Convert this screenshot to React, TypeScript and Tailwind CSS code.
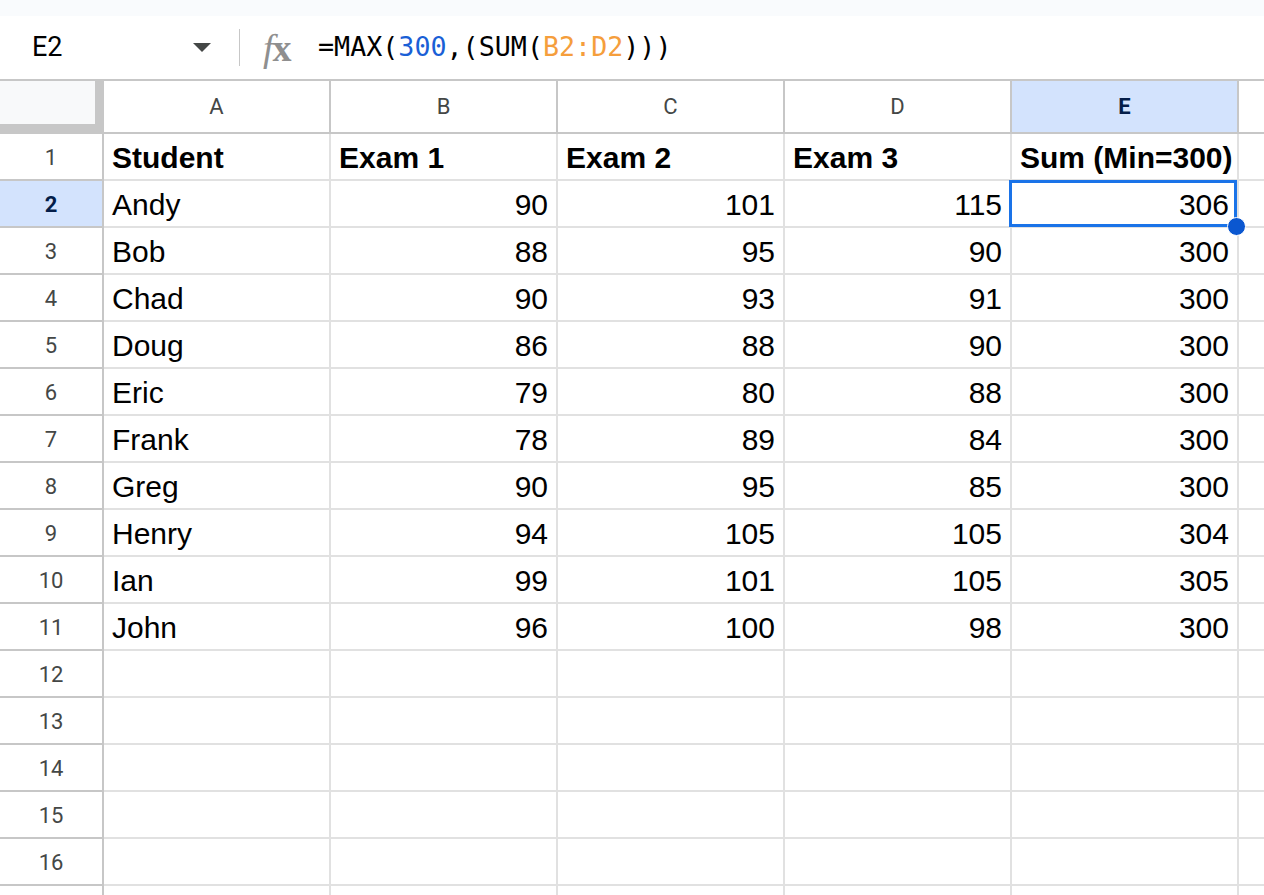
import React from "react";

const rows: (string | number)[][] = [
  ["Andy", 90, 101, 115, 306],
  ["Bob", 88, 95, 90, 300],
  ["Chad", 90, 93, 91, 300],
  ["Doug", 86, 88, 90, 300],
  ["Eric", 79, 80, 88, 300],
  ["Frank", 78, 89, 84, 300],
  ["Greg", 90, 95, 85, 300],
  ["Henry", 94, 105, 105, 304],
  ["Ian", 99, 101, 105, 305],
  ["John", 96, 100, 98, 300],
];

const cols = ["A", "B", "C", "D", "E"];

function RowHeader({ n, selected }: { n?: number; selected?: boolean }) {
  return (
    <div
      className={
        "h-[47px] flex items-center justify-center pt-[1px] border-r-2 border-b-2 border-[#c7c7c7] font-['Roboto'] text-[22px] " +
        (selected ? "bg-[#d3e3fd] text-[#041e49] font-bold" : "bg-white text-[#444746]")
      }
    >
      {n}
    </div>
  );
}

function Cell({
  value,
  bold,
  right,
  children,
}: {
  value?: string | number;
  bold?: boolean;
  right?: boolean;
  children?: React.ReactNode;
}) {
  return (
    <div
      className={
        "relative h-[47px] flex items-center px-[8px] pt-[3px] border-r-2 border-b-2 border-[#e1e1e1] font-['Liberation_Sans'] text-[30px] leading-[34px] text-black whitespace-nowrap " +
        (right ? "justify-end " : "justify-start ") +
        (bold ? "font-bold" : "")
      }
    >
      {value}
      {children}
    </div>
  );
}

export default function App() {
  return (
    <div className="w-[1264px] h-[895px] overflow-hidden bg-white">
      {/* top strip */}
      <div className="h-[16px] bg-[#f9fbfd]" />
      {/* formula bar */}
      <div className="h-[65px] flex items-center border-b-2 border-[#c7c7c7] bg-white">
        <div className="w-[239px] flex items-center justify-between pl-[32px] pr-[28px]">
          <span className="font-['Roboto'] text-[27px] text-black">E2</span>
          <svg width="18" height="9" viewBox="0 0 18 9">
            <path d="M0 0 L18 0 L9 9 Z" fill="#444746" />
          </svg>
        </div>
        <div className="w-px h-[37px] bg-[#c7c7c7]" />
        <div className="ml-[23px] w-[36px] flex items-center text-[#8f8f8f] font-['Liberation_Serif'] text-[38px] leading-none">
          <span className="italic">f</span>
          <span className="font-bold -ml-[1px]">x</span>
        </div>
        <div className="ml-[19px] font-['DejaVu_Sans_Mono'] text-[26.7px] text-black whitespace-nowrap">
          =MAX(<span className="text-[#1a5fd6]">300</span>,(SUM(
          <span className="text-[#f59e3c]">B2:D2</span>)))
        </div>
      </div>

      {/* grid */}
      <div className="grid grid-cols-[104px_227px_227px_227px_227px_227px_1fr]">
        {/* corner */}
        <div className="h-[53px] bg-[#c7c7c7] flex flex-col">
          <div className="w-[95px] h-[43px] bg-[#f8f9fa]" />
        </div>
        {cols.map((c) => (
          <div
            key={c}
            className={
              "h-[53px] flex items-center justify-center border-r-2 border-b-2 border-[#c7c7c7] font-['Roboto'] text-[22px] " +
              (c === "E" ? "bg-[#d3e3fd] text-[#041e49] font-bold" : "bg-white text-[#444746]")
            }
          >
            {c}
          </div>
        ))}
        <div className="h-[53px] border-b-2 border-[#c7c7c7] bg-white" />

        {/* row 1 */}
        <RowHeader n={1} />
        <Cell value="Student" bold />
        <Cell value="Exam 1" bold />
        <Cell value="Exam 2" bold />
        <Cell value="Exam 3" bold />
        <Cell value="Sum (Min=300)" bold />
        <div className="h-[47px] border-b-2 border-[#e1e1e1]" />

        {rows.map((r, i) => (
          <React.Fragment key={i}>
            <RowHeader n={i + 2} selected={i === 0} />
            <Cell value={r[0]} />
            <Cell value={r[1]} right />
            <Cell value={r[2]} right />
            <Cell value={r[3]} right />
            {i === 0 ? (
              <Cell value={r[4]} right>
                <div className="absolute -left-[3px] -top-[1px] right-0 -bottom-[1px] border-[3px] border-[#1a73e8] pointer-events-none" />
                <div className="absolute -right-[9px] -bottom-[10px] w-[19px] h-[19px] rounded-full bg-[#0b57d0] border border-white z-10" />
              </Cell>
            ) : (
              <Cell value={r[4]} right />
            )}
            <div className="h-[47px] border-b-2 border-[#e1e1e1]" />
          </React.Fragment>
        ))}

        {[12, 13, 14, 15, 16, 0].map((n) => (
          <React.Fragment key={"e" + n}>
            <RowHeader n={n || undefined} />
            <Cell />
            <Cell />
            <Cell />
            <Cell />
            <Cell />
            <div className="h-[47px] border-b-2 border-[#e1e1e1]" />
          </React.Fragment>
        ))}
      </div>
    </div>
  );
}
